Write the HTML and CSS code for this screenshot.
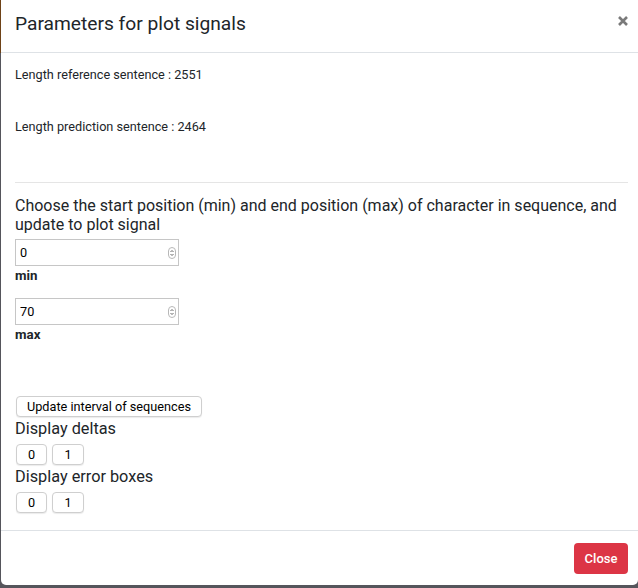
FILE: index.html
```html
<!DOCTYPE html>
<html lang="en">
<head>
<meta charset="utf-8">
<title>Parameters for plot signals</title>
<link rel="stylesheet" href="styles.css">
</head>
<body>
<div class="modal">
  <div class="modal-header">
    <h5 class="modal-title">Parameters for plot signals</h5>
    <button class="close" type="button" aria-label="Close">
      <svg width="10" height="10" viewBox="0 0 10 10"><path d="M1 1L9 9M9 1L1 9" stroke="#7a7a7a" stroke-width="2.6" stroke-linecap="butt"/></svg>
    </button>
  </div>
  <div class="modal-body">
    <p class="info first">Length reference sentence : 2551</p>
    <p class="info second">Length prediction sentence : 2464</p>
    <hr class="sep">
    <p class="lead">Choose the start position (min) and end position (max) of character in sequence, and update to plot signal</p>
    <div class="field">
      <div class="num"><input type="text" value="0"><span class="spin"><svg width="8" height="12" viewBox="0 0 8 12"><rect x="0.5" y="0.5" width="7" height="11" rx="3.5" fill="#fff" stroke="#b8b8b8"/><path d="M2.5 5L4 3.5L5.5 5M2.5 7L4 8.5L5.5 7" fill="none" stroke="#555" stroke-width="0.9"/></svg></span></div>
      <label class="lbl">min</label>
    </div>
    <div class="field second-field">
      <div class="num"><input type="text" value="70"><span class="spin"><svg width="8" height="12" viewBox="0 0 8 12"><rect x="0.5" y="0.5" width="7" height="11" rx="3.5" fill="#fff" stroke="#b8b8b8"/><path d="M2.5 5L4 3.5L5.5 5M2.5 7L4 8.5L5.5 7" fill="none" stroke="#555" stroke-width="0.9"/></svg></span></div>
      <label class="lbl">max</label>
    </div>
    <button class="btn update" type="button">Update interval of sequences</button>
    <p class="sub">Display deltas</p>
    <div class="pair"><button class="btn sm" type="button">0</button><button class="btn sm" type="button">1</button></div>
    <p class="sub">Display error boxes</p>
    <div class="pair"><button class="btn sm" type="button">0</button><button class="btn sm" type="button">1</button></div>
  </div>
  <div class="modal-footer">
    <button class="btn-close" type="button">Close</button>
  </div>
</div>
</body>
</html>
```

FILE: styles.css
```css
html, body {
  margin: 0;
  padding: 0;
}
body {
  width: 638px;
  height: 588px;
  overflow: hidden;
  background: linear-gradient(#6e4217 0, #6e4217 53px, #55555b 53px);
  font-family: Roboto, "Liberation Sans", sans-serif;
  color: #212529;
}
.modal {
  margin-left: 1px;
  width: 637px;
  height: 585px;
  background: #fff;
  border-radius: 0 0 5px 5px;
  display: flex;
  flex-direction: column;
}
.modal-header {
  height: 52px;
  border-bottom: 1px solid #dee2e6;
  display: flex;
  justify-content: space-between;
  align-items: flex-start;
  padding: 0 10px 0 14px;
  box-sizing: content-box;
}
.modal-title {
  margin: 9px 0 0;
  font-size: 19.2px;
  font-weight: 400;
  line-height: 30px;
}
.close {
  margin: 16px 0 0;
  padding: 0;
  border: 0;
  background: transparent;
  width: 10px;
  height: 10px;
  display: flex;
}
.modal-body {
  flex: 1;
  padding: 0 10px 0 14px;
  display: flex;
  flex-direction: column;
  align-items: flex-start;
}
.info {
  margin: 0;
  font-size: 12.7px;
  line-height: 18px;
}
.info.first { margin-top: 13px; }
.info.second { margin-top: 34px; }
.sep {
  align-self: stretch;
  margin: 46px 0 0;
  border: 0;
  border-top: 1px solid #e5e5e5;
  height: 0;
}
.lead {
  margin: 13px 0 0;
  font-size: 16px;
  line-height: 19px;
}
.field {
  margin-top: 5px;
  display: flex;
  flex-direction: column;
  align-items: flex-start;
}
.second-field { margin-top: 15px; }
.num {
  width: 162px;
  height: 25px;
  border: 1px solid #c6c6c6;
  display: flex;
  align-items: center;
  background: #fff;
}
.num input {
  border: 0;
  outline: none;
  padding: 0 0 0 4px;
  margin: 0;
  width: 140px;
  font-family: Roboto, "Liberation Sans", sans-serif;
  font-size: 12.7px;
  color: #000;
  background: transparent;
}
.spin {
  margin-left: 8px;
  display: flex;
}
.lbl {
  margin-top: 3px;
  font-size: 13.3px;
  font-weight: 700;
  line-height: 14px;
}
.btn {
  font-family: Roboto, "Liberation Sans", sans-serif;
  font-size: 12.7px;
  color: #000;
  background: #fff;
  border: 1px solid #cfcfcf;
  border-radius: 4px;
  box-shadow: 0 1px 1px rgba(0,0,0,0.08);
  height: 21px;
  padding: 0 11px;
  line-height: 19px;
  margin: 0;
  white-space: nowrap;
}
.update {
  margin-top: 54px;
  margin-left: 1px;
  padding: 0 10px;
}
.sub {
  margin: 2px 0 0;
  font-size: 16.3px;
  line-height: 19px;
}
.pair {
  margin-top: 6px;
  margin-left: 1px;
  display: flex;
  gap: 5px;
}
.sm { width: 31px; padding: 0; }
.sm + .sm { width: 32px; }
.modal-footer {
  height: 54px;
  border-top: 1px solid #dee2e6;
  display: flex;
  align-items: center;
  justify-content: flex-end;
  padding-right: 10px;
  box-sizing: content-box;
}
.btn-close {
  width: 54px;
  height: 31px;
  border: 0;
  border-radius: 4px;
  background: #dc3545;
  color: #fff;
  font-family: Roboto, "Liberation Sans", sans-serif;
  font-size: 13px;
  font-weight: 500;
  padding: 0;
}
```
